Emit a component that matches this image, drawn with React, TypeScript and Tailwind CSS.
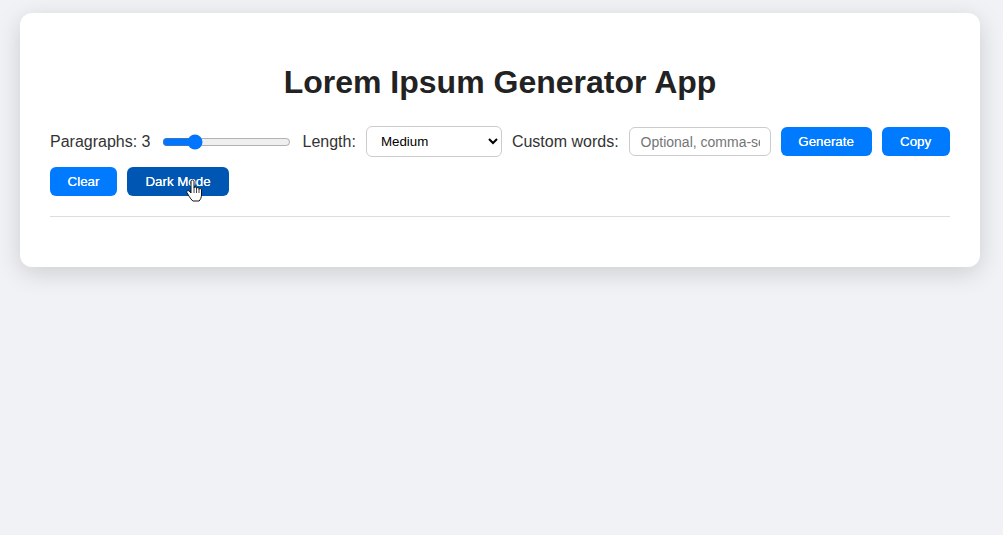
import { useState } from "react"

const buttonClass =
  "h-[29px] rounded-md bg-[#007bff] text-white text-[13.33px] leading-none [text-shadow:0_0_0.4px_#ffffff]"

export default function App() {
  const [count, setCount] = useState(3)

  return (
    <div className="min-h-[535px] bg-[#f0f2f5] pl-5 pt-[13px] font-['Liberation_Sans',Arial,sans-serif] text-[#222222]">
      <div className="w-[960px] bg-white rounded-xl px-[30px] pt-[51px] pb-[50px] shadow-[0_6px_25px_rgba(0,0,0,0.15)]">
        <h1 className="text-[32px] leading-[37px] font-bold text-center mb-[25px]">
          Lorem Ipsum Generator App
        </h1>

        <div className="flex flex-wrap items-center gap-[10px] pb-5 border-b border-[#dddddd]">
          <label className="text-[16px] leading-[18px] text-[#333333]">Paragraphs: {count}</label>
          <input
            type="range"
            min={1}
            max={10}
            value={count}
            onChange={(e) => setCount(Number(e.target.value))}
            className="w-[129px] ml-[1px] mr-[2px] accent-[#0075ff]"
          />
          <label className="text-[16px] leading-[18px] text-[#333333]">Length:</label>
          <select
            defaultValue="medium"
            className="w-[136px] h-[31px] px-[10px] bg-white border border-[#cccccc] rounded-md text-[13.33px] text-black"
          >
            <option value="short">Short</option>
            <option value="medium">Medium</option>
            <option value="long">Long</option>
          </select>
          <label className="text-[16px] leading-[18px] text-[#333333]">Custom words:</label>
          <input
            type="text"
            placeholder="Optional, comma-separated"
            className="w-[142px] h-[29px] pl-[11px] pr-[10px] border border-[#cccccc] rounded-md text-[14px] placeholder:text-[#757575]"
          />
          <button className={`${buttonClass} w-[91px]`}>Generate</button>
          <button className={`${buttonClass} w-[68px]`}>Copy</button>
          <button className={`${buttonClass} w-[67px]`}>Clear</button>
          <button className="relative h-[29px] w-[102px] rounded-md bg-[#0056b3] text-white text-[13.33px] leading-none [text-shadow:0_0_0.4px_#ffffff]">
            Dark Mode
            <svg
              viewBox="0 0 17 24"
              className="absolute left-[59px] top-[12px] w-[17px] h-[24px]"
            >
              <path
                d="M5 2.5c0-2 3-2 3 0V9c0-1.4 2.5-1.4 2.5 0v.6c0-1.3 2.5-1.3 2.5 0v.8c0-1.2 2.5-1.1 2.5.4v5.2c0 2.6-1.2 4.6-2.4 6H6.8c-1.4-1.2-2.6-3-3.6-4.6L.9 13.6c-.8-1.5 1-2.8 2.2-1.6L5 14z"
                fill="#ffffff"
                stroke="#111111"
                strokeWidth="1"
                strokeLinejoin="round"
              />
              <path d="M8 9v5M10.5 9.6v4.4M13 10.4v3.6" stroke="#111111" strokeWidth="0.8" fill="none" />
            </svg>
          </button>
        </div>
      </div>
    </div>
  )
}
